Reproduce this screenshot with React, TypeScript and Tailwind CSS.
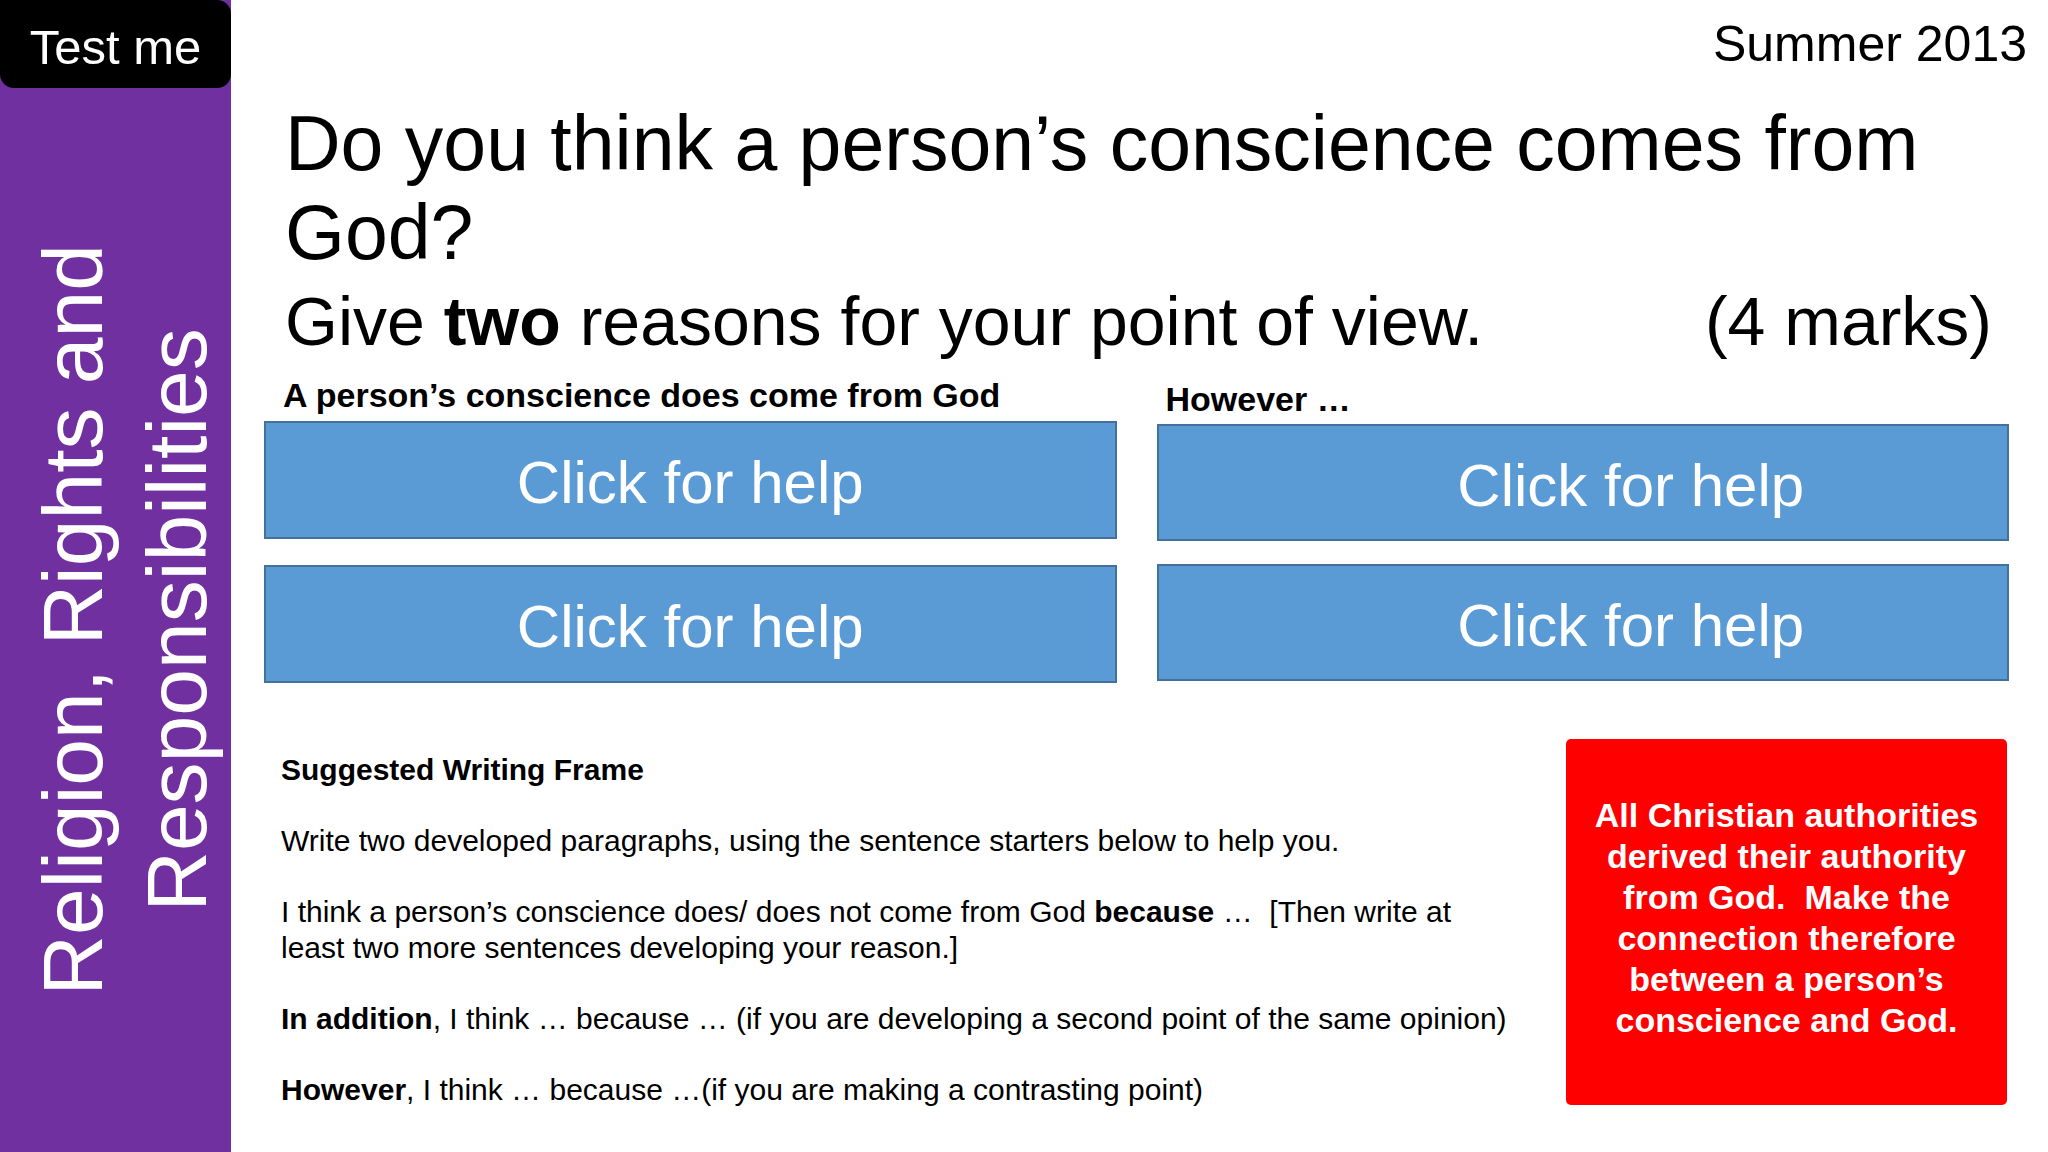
import React from "react";

function HelpBox({ shift, tall }: { shift?: boolean; tall?: boolean }) {
  return (
    <div
      className={
        "bg-[#5b9bd5] border-2 border-[#41719c] flex items-center justify-center text-white text-[60px] leading-none " +
        (tall ? "h-[118px] " : "h-[117px] ") +
        (shift ? "pl-[96px]" : "")
      }
    >
      <span className="pt-[6px]">Click for help</span>
    </div>
  );
}

export default function App() {
  return (
    <div className="flex w-[2048px] h-[1152px] overflow-hidden bg-white text-black font-['Liberation_Sans',Arial,sans-serif]">
      <aside className="w-[231px] shrink-0 bg-[#7030a0] flex flex-col">
        <div className="h-[88px] bg-black rounded-b-[14px] rounded-tr-[14px] flex items-center justify-center pt-[6px] text-white text-[49px] leading-none">
          Test me
        </div>
        <div className="flex-1 flex items-center justify-center pl-[19px]">
          <div className="[writing-mode:vertical-rl] rotate-180 text-center text-white text-[84px] leading-[104px] whitespace-nowrap">
            Religion, Rights and
            <br />
            Responsibilities
          </div>
        </div>
      </aside>

      <main className="flex-1 flex flex-col">
        <div className="pt-[16px] pr-[21px] text-right text-[50px] leading-[56px]">
          Summer 2013
        </div>

        <h1 className="mt-[27px] pl-[54px] text-[77px] leading-[89px] font-normal whitespace-nowrap">
          Do you think a person’s conscience comes from
          <br />
          God?
        </h1>

        <div className="mt-[4px] pl-[54px] pr-[56px] flex justify-between text-[68px] leading-[80px] whitespace-nowrap">
          <span>
            Give <b>two</b> reasons for your point of view.
          </span>
          <span>(4 marks)</span>
        </div>

        <div className="mt-[14px] pl-[33px] pr-[39px] grid grid-cols-2 gap-x-[40px] items-start">
          <div className="flex flex-col">
            <div className="pl-[19px] mb-[6px] text-[34px] leading-[40px] font-bold whitespace-nowrap">
              A person’s conscience does come from God
            </div>
            <div className="flex flex-col gap-[26px]">
              <HelpBox tall />
              <HelpBox tall />
            </div>
          </div>
          <div className="flex flex-col mt-[4px]">
            <div className="pl-[9px] mb-[5px] text-[34px] leading-[40px] font-bold whitespace-nowrap">
              However …
            </div>
            <div className="flex flex-col gap-[23px]">
              <HelpBox shift />
              <HelpBox shift />
            </div>
          </div>
        </div>

        <div className="mt-[56px] pl-[50px] pr-[41px] flex justify-between">
          <div className="pt-[13px] text-[30px] leading-[35.5px] whitespace-nowrap">
            <p className="font-bold">Suggested Writing Frame</p>
            <p className="mt-[35.5px]">
              Write two developed paragraphs, using the sentence starters below to help you.
            </p>
            <p className="mt-[35.5px]">
              I think a person’s conscience does/ does not come from God <b>because</b> …&nbsp; [Then write at
              <br />
              least two more sentences developing your reason.]
            </p>
            <p className="mt-[35.5px]">
              <b>In addition</b>, I think … because … (if you are developing a second point of the same opinion)
            </p>
            <p className="mt-[35.5px]">
              <b>However</b>, I think … because …(if you are making a contrasting point)
            </p>
          </div>

          <div className="w-[441px] h-[366px] shrink-0 bg-[#ff0000] rounded-[5px] flex items-center justify-center pb-[8px] text-center text-white font-bold text-[34px] leading-[41px] whitespace-nowrap">
            <p>
              All Christian authorities
              <br />
              derived their authority
              <br />
              from God.&nbsp; Make the
              <br />
              connection therefore
              <br />
              between a person’s
              <br />
              conscience and God.
            </p>
          </div>
        </div>
      </main>
    </div>
  );
}
